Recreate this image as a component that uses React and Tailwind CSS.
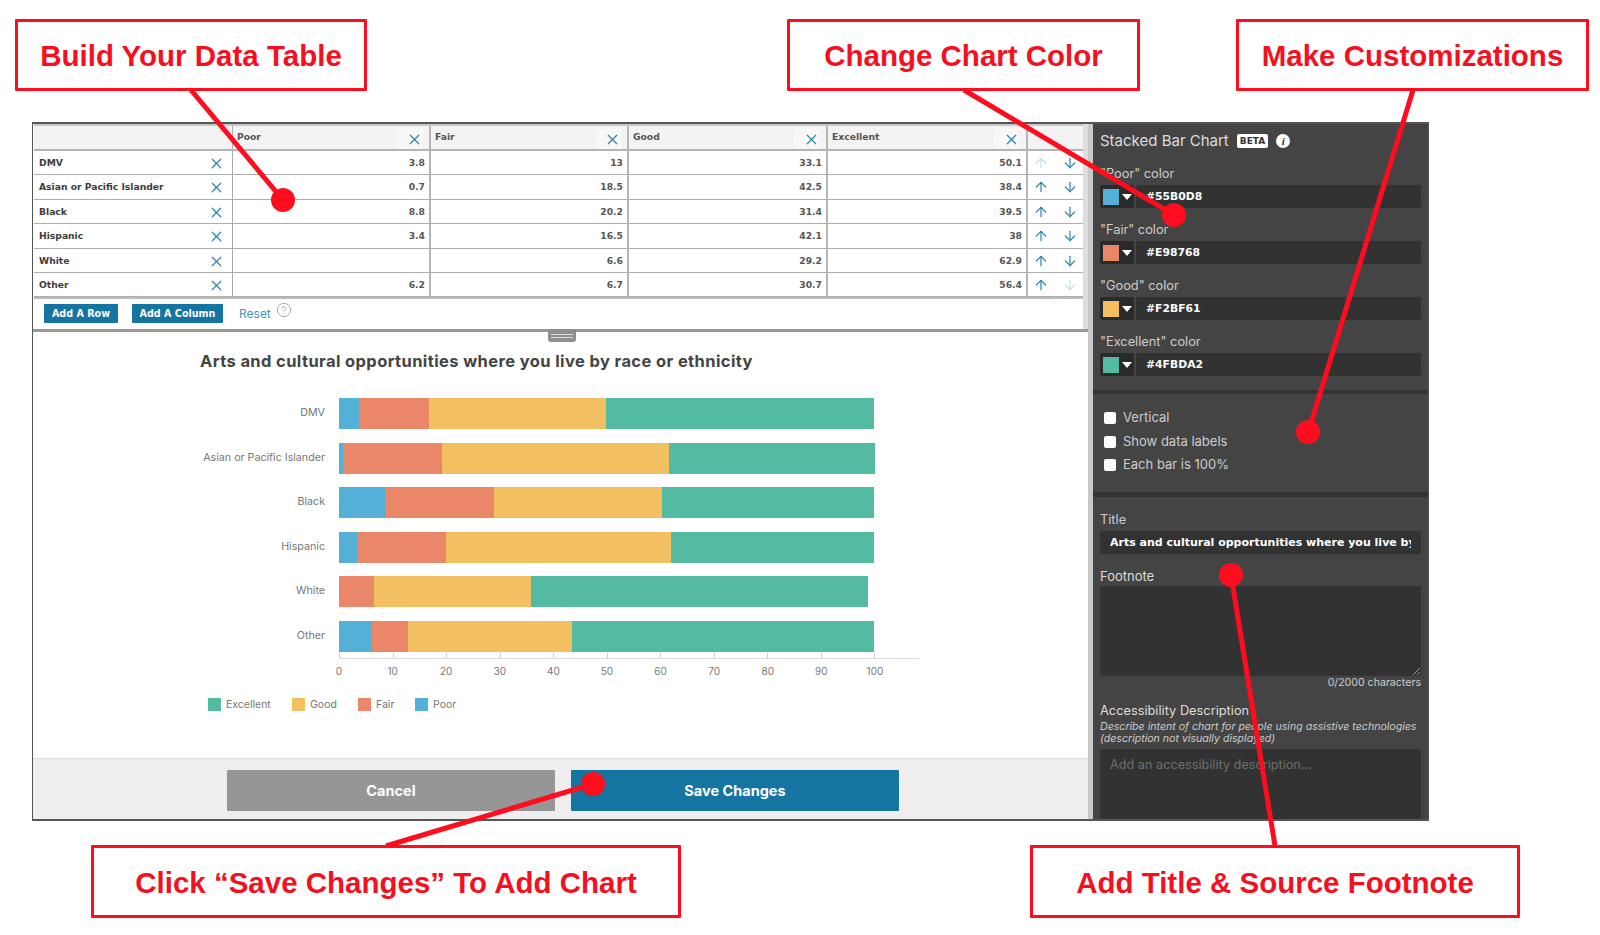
import { X, ArrowUp, ArrowDown, CircleHelp } from "lucide-react";

const columns = ["Poor", "Fair", "Good", "Excellent"];

const rows = [
  { name: "DMV", values: [3.8, 13, 33.1, 50.1] },
  { name: "Asian or Pacific Islander", values: [0.7, 18.5, 42.5, 38.4] },
  { name: "Black", values: [8.8, 20.2, 31.4, 39.5] },
  { name: "Hispanic", values: [3.4, 16.5, 42.1, 38] },
  { name: "White", values: ["", 6.6, 29.2, 62.9] },
  { name: "Other", values: [6.2, 6.7, 30.7, 56.4] },
];

const seriesColors = ["#55b0d8", "#e98768", "#f2bf61", "#53bba1"];
const colorFields = [
  { label: '"Poor" color', hex: "#55B0D8", color: "#55b0d8" },
  { label: '"Fair" color', hex: "#E98768", color: "#e98768" },
  { label: '"Good" color', hex: "#F2BF61", color: "#f2bf61" },
  { label: '"Excellent" color', hex: "#4FBDA2", color: "#53bba1" },
];
const legend = [
  { label: "Excellent", color: "#53bba1", width: "w-[84px]" },
  { label: "Good", color: "#f2bf61", width: "w-[66px]" },
  { label: "Fair", color: "#e98768", width: "w-[57px]" },
  { label: "Poor", color: "#55b0d8", width: "w-[50px]" },
];
const ticks = [0, 10, 20, 30, 40, 50, 60, 70, 80, 90, 100];
const gridCols = "grid grid-cols-[199px_198px_198px_199px_200px_55px]";
const PX_PER_UNIT = 5.355;

function DataTable() {
  return (
    <div className="ml-[1px] border-b-2 border-[#bbb] w-[1049px] font-['DejaVu_Sans',sans-serif] text-[9.2px] font-bold text-[#444]">
      {/* header */}
      <div className={`${gridCols} h-[27px] bg-[#f3f3f3] border-t-2 border-t-[#c8c8c8] border-b-2 border-b-[#b5b5b5]`}>
        <div className="border-r border-[#aaa]"></div>
        {columns.map((c) => (
          <div key={c} className="relative border-r-2 border-[#b5b5b5] pl-[4px] pt-[4px] text-[#555]">
            {c}
            <div className="absolute right-[6px] top-[3px] w-[26px] h-[20px] flex justify-end items-center bg-[#f8f8f8]">
              <X size={17} strokeWidth={1.7} className="text-[#2a86ad]" />
            </div>
          </div>
        ))}
        <div></div>
      </div>
      {/* rows */}
      {rows.map((r, i) => (
        <div key={r.name} className={`${gridCols} h-[24.4px] border-b border-[#aeaeae]`}>
          <div className="flex justify-between border-r border-[#aaa] pl-[5px] pr-[7px] pt-[5px] text-[#3d3d3d]">
            {r.name}
            <X size={17} strokeWidth={1.7} className="text-[#2a86ad] -mt-[1px]" />
          </div>
          {r.values.map((v, j) => (
            <div key={j} className="border-r-2 border-[#b5b5b5] text-right pr-[4px] pt-[5px] text-[#555]">
              {v}
            </div>
          ))}
          <div className="flex justify-between pl-[5px] pr-[5px] pt-[4px]">
            <ArrowUp size={16} strokeWidth={1.8} className={i === 0 ? "text-[#c5dfea]" : "text-[#2a86ad]"} />
            <ArrowDown size={16} strokeWidth={1.8} className={i === rows.length - 1 ? "text-[#c5dfea]" : "text-[#2a86ad]"} />
          </div>
        </div>
      ))}
    </div>
  );
}

function StackedChart() {
  return (
    <div className="flex-1 bg-white relative pt-[19px] font-['Inter',sans-serif]">
      <div className="absolute left-[515px] top-[-3px] w-[28px] h-[13px] rounded-b-[3px] bg-[#8f8f8f] flex flex-col justify-center gap-[2px] px-[3px]">
        <div className="h-[1px] bg-[#ddd]"></div>
        <div className="h-[1px] bg-[#ddd]"></div>
      </div>
      <h2 className="pl-[167px] text-[16.5px] tracking-[0.39px] leading-[20px] font-bold text-[#444]">
        Arts and cultural opportunities where you live by race or ethnicity
      </h2>
      <div className="mt-[27px] flex flex-col gap-[13.5px] w-[900px]">
        {rows.map((r) => (
          <div key={r.name} className="flex items-center h-[31px]">
            <div className="w-[293px] shrink-0 pr-[1px] text-right text-[10.7px] text-[#777]">{r.name}</div>
            <div className="ml-[13px] flex h-full">
              {r.values.map((v, j) => (
                <div
                  key={j}
                  style={{ width: (v || 0) * PX_PER_UNIT, backgroundColor: seriesColors[j] }}
                ></div>
              ))}
            </div>
          </div>
        ))}
      </div>
      {/* x axis */}
      <div className="ml-[306px] mt-[1px] w-[580px] h-[6px] border-b border-[#ddd]">
        <div className="flex justify-between w-[536px] h-full">
          {ticks.map((t) => (
            <div key={t} className="w-[1px] bg-[#ccc]"></div>
          ))}
        </div>
      </div>
      <div className="ml-[306px] mt-[5px] flex justify-between w-[536px] text-[10px] leading-[14px] text-[#777]">
        {ticks.map((t) => (
          <div key={t} className="w-0 flex justify-center">{t}</div>
        ))}
      </div>
      {/* legend */}
      <div className="ml-[175px] mt-[20px] flex text-[10.5px] leading-[14px] text-[#777]">
        {legend.map((l) => (
          <div key={l.label} className={`flex items-center gap-[5px] ${l.width}`}>
            <div className="w-[13px] h-[13px]" style={{ backgroundColor: l.color }}></div>
            {l.label}
          </div>
        ))}
      </div>
    </div>
  );
}

function ColorField({ label, hex, color }) {
  return (
    <div className="mb-[14px]">
      <div className="text-[12.8px] leading-[16px] text-[#ccc] mb-[3px]">{label}</div>
      <div className="flex gap-[2px] h-[23px]">
        <div className="w-[34px] bg-[#2a2a2a] rounded-[2px] flex items-center pl-[3px] gap-[3px]">
          <div className="w-[16px] h-[16px]" style={{ backgroundColor: color }}></div>
          <div className="w-0 h-0 border-x-[5px] border-x-transparent border-t-[6px] border-t-white"></div>
        </div>
        <div className="flex-1 bg-[#323232] rounded-[2px] pl-[10px] font-['DejaVu_Sans',sans-serif] font-bold text-[10.8px] leading-[23px] text-white">
          {hex}
        </div>
      </div>
    </div>
  );
}

function SidePanel() {
  return (
    <div className="w-[335px] shrink-0 bg-[#444] font-['Inter',sans-serif] text-[#ccc] overflow-hidden">
      <div className="h-[266px] px-[7px] pt-[7px]">
        <div className="flex items-center h-[20px] mb-[15px]">
          <span className="text-[15px] text-[#ddd]">Stacked Bar Chart</span>
          <span className="ml-[8px] bg-white text-[#333] text-[9px] font-bold leading-[14px] px-[3px] rounded-[2px] font-['DejaVu_Sans',sans-serif]">BETA</span>
          <span className="ml-[8px] w-[14px] h-[14px] rounded-full bg-white text-[#333] text-[11px] font-bold italic leading-[14px] text-center font-['Liberation_Serif',serif]">i</span>
        </div>
        {colorFields.map((f) => (
          <ColorField key={f.hex} {...f} />
        ))}
      </div>
      <div className="h-[4px] bg-[#333]"></div>
      <div className="h-[98px] px-[11px] pt-[16px] flex flex-col gap-[7.5px]">
        {["Vertical", "Show data labels", "Each bar is 100%"].map((t) => (
          <div key={t} className="flex items-center gap-[7px] h-[16px] text-[13px]">
            <div className="w-[12px] h-[12px] rounded-[2px] bg-white"></div>
            {t}
          </div>
        ))}
      </div>
      <div className="h-[5px] bg-[#333]"></div>
      <div className="px-[7px] pt-[15px]">
        <div className="text-[12.8px] leading-[16px] mb-[3px]">Title</div>
        <div className="h-[23px] bg-[#323232] rounded-[2px] pl-[10px] pr-[10px] overflow-hidden whitespace-nowrap font-['DejaVu_Sans',sans-serif] font-bold text-[11px] leading-[23px] text-white">
          <div className="overflow-hidden">Arts and cultural opportunities where you live by race or ethnicity</div>
        </div>
        <div className="text-[13px] leading-[16px] mt-[14px] mb-[2px] text-[#ddd]">Footnote</div>
        <div className="relative h-[90px] bg-[#323232] rounded-[2px]">
          <svg className="absolute right-[1px] bottom-[1px]" width="7" height="7" viewBox="0 0 7 7">
            <path d="M0 7 L7 0 M4 7 L7 4" stroke="#999" strokeWidth="1" />
          </svg>
        </div>
        <div className="text-right text-[10.6px] leading-[14px]">0/2000 characters</div>
        <div className="text-[12.8px] leading-[16px] mt-[13px] text-[#ddd]">Accessibility Description</div>
        <div className="text-[10.6px] leading-[12px] italic mt-[2px] text-[#ccc] whitespace-nowrap">
          Describe intent of chart for people using assistive technologies
          <br />
          (description not visually displayed)
        </div>
        <div className="h-[70px] mt-[4px] bg-[#323232] rounded-[2px] pl-[10px] pt-[6px] text-[12.7px] text-[#6e6e6e]">
          Add an accessibility description...
        </div>
      </div>
    </div>
  );
}

function Callout({ className, children }) {
  return (
    <div className={`absolute border-[3px] border-[#ff0d1f] rounded-[1px] bg-white flex items-center justify-center font-['Liberation_Sans',sans-serif] font-bold text-[29.5px] text-[#f5101f] ${className}`}>
      {children}
    </div>
  );
}

function Annotations() {
  return (
    <>
      <svg className="absolute inset-0 pointer-events-none" width="1600" height="935" viewBox="0 0 1600 935">
        <g stroke="#ff0d1f" strokeWidth="5" fill="#ff0d1f">
          <line x1="191" y1="90" x2="283" y2="200" />
          <line x1="964" y1="90" x2="1174" y2="215" />
          <line x1="1413" y1="90" x2="1308" y2="433" />
          <line x1="386" y1="846" x2="593" y2="784" />
          <line x1="1275" y1="846" x2="1231" y2="575" />
          <circle cx="283" cy="200" r="12" stroke="none" />
          <circle cx="1174" cy="215" r="12" stroke="none" />
          <circle cx="1308" cy="432" r="12" stroke="none" />
          <circle cx="593" cy="784" r="12" stroke="none" />
          <circle cx="1231" cy="575" r="12" stroke="none" />
        </g>
      </svg>
      <Callout className="left-[15px] top-[19px] w-[352px] h-[72px] pt-[3px]">Build Your Data Table</Callout>
      <Callout className="left-[787px] top-[19px] w-[353px] h-[72px] pt-[3px]">Change Chart Color</Callout>
      <Callout className="left-[1236px] top-[19px] w-[353px] h-[72px] pt-[3px]">Make Customizations</Callout>
      <Callout className="left-[91px] top-[845px] w-[590px] h-[73px] pt-[4px]">Click “Save Changes” To Add Chart</Callout>
      <Callout className="left-[1030px] top-[845px] w-[490px] h-[73px] pt-[4px]">Add Title &amp; Source Footnote</Callout>
    </>
  );
}

export default function App() {
  return (
    <div className="relative w-[1600px] h-[935px] bg-white overflow-hidden">
      <div className="pt-[122px] pl-[32px]">
        <div className="flex w-[1397px] h-[699px] border-t-2 border-x border-b-2 border-[#555]">
          <div className="flex-1 flex flex-col bg-[#c8c8c8]">
            {/* editor top */}
            <div className="h-[208px] mr-[5px] flex border-b-[3px] border-[#999]">
              <div className="flex-1 bg-white">
                <DataTable />
                <div className="flex items-center gap-[14px] pl-[11px] pt-[5px] font-['DejaVu_Sans',sans-serif]">
                  <button className="w-[74px] h-[19px] bg-[#1574a0] text-white text-[9.6px] font-bold rounded-[1px]">Add A Row</button>
                  <button className="w-[91px] h-[19px] bg-[#1574a0] text-white text-[9.6px] font-bold rounded-[1px]">Add A Column</button>
                  <span className="ml-[2px] font-['Inter',sans-serif] text-[12px] text-[#4b94b6]">Reset</span>
                  <CircleHelp size={16} strokeWidth={1.5} className="-ml-[9px] -mt-[8px] text-[#aaa]" />
                </div>
              </div>
              <div className="w-[5px] bg-[#ddd]"></div>
            </div>
            <div className="flex-1 flex flex-col mr-[5px]">
              <StackedChart />
              <div className="h-[61px] bg-[#eee] border-t border-[#ddd] flex gap-[16px] pl-[194px] pt-[11px] font-['Inter',sans-serif]">
                <button className="w-[328px] h-[41px] bg-[#969696] text-white text-[14.5px] font-bold rounded-[1px]">Cancel</button>
                <button className="w-[328px] h-[41px] bg-[#1574a0] text-white text-[14.5px] font-bold rounded-[1px]">Save Changes</button>
              </div>
            </div>
          </div>
          <SidePanel />
        </div>
      </div>
      <Annotations />
    </div>
  );
}
